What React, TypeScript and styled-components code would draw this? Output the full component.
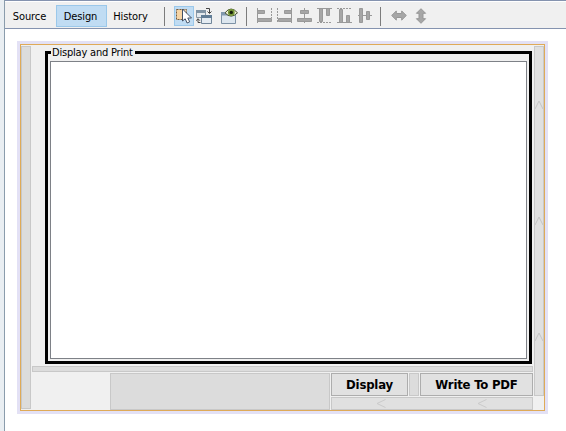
import React from "react";
import styled, { createGlobalStyle } from "styled-components";

const GlobalStyle = createGlobalStyle`
  * { box-sizing: border-box; }
  body { margin: 0; background: #fff; overflow: hidden; }
`;

const Window = styled.div`
  display: flex;
  width: 566px;
  height: 431px;
  background: #e9eef2;
  padding-left: 4px;
  font-family: "DejaVu Sans Condensed", "DejaVu Sans", sans-serif;
  font-stretch: condensed;
  font-size: 11px;
  color: #000;
`;

const Editor = styled.main`
  flex: 1;
  display: flex;
  flex-direction: column;
  background: #fff;
  border-left: 1px solid #8a9cac;
`;

const Toolbar = styled.header`
  display: flex;
  align-items: center;
  height: 29px;
  background: #f0f0f0;
  border-top: 1px solid #8593af;
  border-bottom: 1px solid #8593af;
  box-shadow: inset 0 1px #fff;
  padding-top: 3px;
`;

const ViewTab = styled.button<{ $width: number; $active?: boolean }>`
  width: ${(p) => p.$width}px;
  height: 22px;
  padding: 1px 2px 0 0;
  border: 1px solid ${(p) => (p.$active ? "#9bc8ea" : "transparent")};
  background: ${(p) => (p.$active ? "#c0dcf3" : "transparent")};
  font: inherit;
  letter-spacing: -0.1px;
  color: inherit;
  white-space: nowrap;
`;

const Separator = styled.div<{ $before: number; $after: number }>`
  width: 1px;
  height: 19px;
  margin: 1px ${(p) => p.$after}px 0 ${(p) => p.$before}px;
  background: #7c7c7c;
`;

const Tool = styled.div<{ $width: number; $active?: boolean }>`
  display: flex;
  justify-content: center;
  align-items: center;
  width: ${(p) => p.$width}px;
  height: 20px;
  ${(p) => p.$active && "background: #c0dcf3; border: 1px solid #9bc8ea;"}
  svg { display: block; flex: none; }
`;

const Selection = styled.section`
  width: 531px;
  height: 373px;
  margin: 12px 0 0 12px;
  padding: 3px;
  background: #e3e1f5;
`;

const Form = styled.div`
  display: grid;
  grid-template-columns: 10px 503px 10px;
  width: 525px;
  height: 367px;
  padding-top: 1px;
  border: 1px solid #dfaa57;
  background: #f0f0f0;
`;

const Gap = styled.div<{ $height?: number }>`
  height: ${(p) => (p.$height ? `${p.$height}px` : "auto")};
  background: #dcdcdc;
  border: 1px solid #c8c8c8;
`;

const Spring = styled(Gap)`
  display: flex;
  flex-direction: column;
  align-items: center;
  background: #e0e0e0;
  padding-top: 53px;
  gap: 106px;
  svg { display: block; flex: none; }
`;

const Body = styled.div`
  width: 501px;
  margin-left: 1px;
  display: flex;
  flex-direction: column;
`;

const Group = styled.fieldset`
  width: 487px;
  height: 319px;
  min-width: 0;
  margin: -1px 0 2px 13px;
  padding: 0 2px 2px;
  border: 3px solid #000;
  display: flex;
`;

const GroupTitle = styled.legend`
  height: 15px;
  margin-left: 1px;
  padding: 0 2px 0 1px;
  line-height: 15px;
  letter-spacing: -0.2px;
  white-space: nowrap;
`;

const Canvas = styled.div`
  flex: 1;
  height: 298px;
  margin-top: 1px;
  background: #fff;
  border: 1px solid #7e8187;
`;

const Footer = styled.div`
  display: grid;
  grid-template-columns: 220px 202px;
  column-gap: 1px;
  margin: 1px 0 0 78px;
  height: 37px;
`;

const Actions = styled.div`
  display: flex;
  flex-direction: column;
  gap: 1px;
`;

const ButtonRow = styled.div`
  display: grid;
  grid-template-columns: 77px 10px 113px;
  column-gap: 1px;
  height: 23px;
`;

const ActionButton = styled.button`
  padding: 0;
  border: 1px solid #adadad;
  background: #e1e1e1;
  color: #000;
  font: bold 13px "DejaVu Sans Condensed", "DejaVu Sans", sans-serif;
  font-stretch: condensed;
  letter-spacing: -0.2px;
  white-space: nowrap;
`;

const WideSpring = styled(Gap)`
  display: flex;
  align-items: center;
  height: 13px;
  padding-left: 44px;
  gap: 91px;
  background: #e0e0e0;
`;

const ChevronUp = () => (
  <svg width="8" height="10" viewBox="0 0 8 10" fill="none" stroke="#c4c4c4">
    <path d="M0 9L4 1L8 9" />
  </svg>
);
const ChevronLeft = () => (
  <svg width="10" height="9" viewBox="0 0 10 9" fill="none" stroke="#cacaca">
    <path d="M9.5 .5L1 4.5L9.5 8.5" />
  </svg>
);

const SelectIcon = () => (
  <svg width="18" height="18" viewBox="0 0 18 18">
    <path d="M1.5 2.5H11.5V12.5H1.5Z" fill="#f6d4a4" stroke="#795c3c" strokeDasharray="2 1" />
    <path d="M7.5 2V14L10.2 11.8L12.1 16L14.7 14.8L12.8 11H16.5Z" fill="#fff" stroke="#445267" />
  </svg>
);
const ConnectIcon = () => (
  <svg width="16" height="16" viewBox="0 0 16 16">
    <path d="M.5 2.5H9.5V9.5H.5Z" fill="#e4e9ed" stroke="#8a99a6" />
    <path d="M0 2H10V5H0Z" fill="#8093a4" />
    <path d="M5.5 7.5H15.5V15.5H5.5Z" fill="#e4ebf2" stroke="#71869a" />
    <path d="M5 7H16V10H5Z" fill="#617d96" />
    <path d="M10 .5H13.5V5M11.5 3.5L13.5 5.5L15.5 3.5M4.5 14.5H2V11M.3 12.7L2 10.7L3.9 12.7" fill="none" stroke="#444" />
  </svg>
);
const PreviewIcon = () => (
  <svg width="17" height="16" viewBox="0 0 17 16">
    <path d="M.5 4.5H14.5V15.5H.5Z" fill="#dce6ef" stroke="#7d92a6" />
    <path d="M0 4H15V7.5H0Z" fill="#8199ae" />
    <path d="M4 4.8Q10 -2.8 16.5 4.8Q10 11.5 4 4.8Z" fill="#f2f4dc" stroke="#46502f" />
    <circle cx="10.3" cy="4.4" r="3.4" fill="#749637" />
    <circle cx="10.3" cy="4.4" r="1.7" fill="#151c0b" />
  </svg>
);

const bars: Record<string, { fill: string; dash?: string; line?: string }> = {
  left: { fill: "M.5 2.5H7.5V5.5H.5ZM.5 10.5H14.5V13.5H.5Z", line: "M.5 0V15", dash: "M14.5 0V10" },
  right: { fill: "M7.5 2.5H14.5V5.5H7.5ZM1.5 10.5H14.5V13.5H1.5Z", line: "M14.5 0V15", dash: "M.5 0V15" },
  center: { fill: "M3.5 2.5H11.5V5.5H3.5ZM.5 10.5H14.5V13.5H.5Z", line: "M7.5 0V15" },
  top: { fill: "M2.5 .5H5.5V13.5H2.5ZM9.5 .5H12.5V7.5H9.5Z", line: "M0 .5H15", dash: "M0 14.5H15" },
  bottom: { fill: "M2.5 1.5H5.5V14.5H2.5ZM9.5 7.5H12.5V14.5H9.5Z", line: "M0 14.5H15", dash: "M0 .5H15" },
  middle: { fill: "M2.5 .5H5.5V14.5H2.5ZM9.5 3.5H12.5V11.5H9.5Z", line: "M1 7.5H15" },
};

const AlignIcon = ({ kind }: { kind: string }) => {
  const b = bars[kind];
  return (
    <svg width="16" height="16" viewBox="0 0 16 16" fill="none" stroke="#999">
      <path d={b.line} />
      <path d={b.fill} fill="#a6a6a6" />
      {b.dash && <path d={b.dash} strokeDasharray="2 1" />}
    </svg>
  );
};

const ResizeIcon = ({ vertical }: { vertical?: boolean }) => (
  <svg width="16" height="16" viewBox="0 0 16 16">
    <path
      d="M.7 7.5L5.3 2.9V5.5H10.7V2.9L15.3 7.5L10.7 12.1V9.5H5.3V12.1Z"
      fill="#a6a6a6"
      stroke="#979797"
      transform={vertical ? "rotate(90 7.75 7.75)" : undefined}
    />
  </svg>
);

export default function App() {
  return (
    <>
      <GlobalStyle />
      <Window>
        <Editor>
          <Toolbar>
            <ViewTab $width={51}>Source</ViewTab>
            <ViewTab $width={51} $active>Design</ViewTab>
            <ViewTab $width={49}>History</ViewTab>
            <Separator $before={8} $after={9} />
            <Tool $width={20} $active><SelectIcon /></Tool>
            <Tool $width={20}><ConnectIcon /></Tool>
            <Tool $width={31}><PreviewIcon /></Tool>
            <Separator $before={1} $after={8} />
            {Object.keys(bars).map((kind) => (
              <Tool key={kind} $width={20}><AlignIcon kind={kind} /></Tool>
            ))}
            <Separator $before={5} $after={6} />
            <Tool $width={23}><ResizeIcon /></Tool>
            <Tool $width={22}><ResizeIcon vertical /></Tool>
          </Toolbar>
          <Selection>
            <Form>
              <Gap $height={363} />
              <Body>
                <Group>
                  <GroupTitle>Display and Print</GroupTitle>
                  <Canvas />
                </Group>
                <Gap $height={6} />
                <Footer>
                  <Gap />
                  <Actions>
                    <ButtonRow>
                      <ActionButton>Display</ActionButton>
                      <Gap />
                      <ActionButton>Write To PDF</ActionButton>
                    </ButtonRow>
                    <WideSpring><ChevronLeft /><ChevronLeft /></WideSpring>
                  </Actions>
                </Footer>
              </Body>
              <Spring $height={350}><ChevronUp /><ChevronUp /><ChevronUp /></Spring>
            </Form>
          </Selection>
        </Editor>
      </Window>
    </>
  );
}
